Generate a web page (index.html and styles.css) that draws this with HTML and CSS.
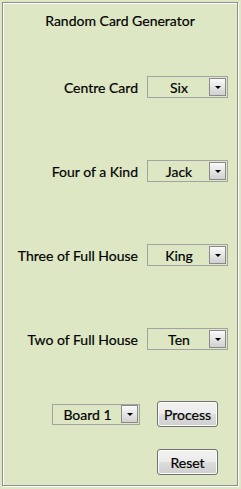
FILE: index.html
```html
<!DOCTYPE html>
<html lang="en">
<head>
  <meta charset="UTF-8" />
  <title>Random Card Generator</title>
  <link rel="stylesheet" href="styles.css">
</head>
<body>
  <div class="frame">
    <div class="title">Random Card Generator</div>

    <div class="row first">
      <span class="label">Centre Card</span>
      <div class="combo"><span class="value">Six</span><span class="drop"></span></div>
    </div>

    <div class="row">
      <span class="label">Four of a Kind</span>
      <div class="combo"><span class="value">Jack</span><span class="drop"></span></div>
    </div>

    <div class="row">
      <span class="label">Three of Full House</span>
      <div class="combo"><span class="value">King</span><span class="drop"></span></div>
    </div>

    <div class="row">
      <span class="label">Two of Full House</span>
      <div class="combo"><span class="value">Ten</span><span class="drop"></span></div>
    </div>

    <div class="actions">
      <div class="combo board"><span class="value">Board 1</span><span class="drop"></span></div>
      <button class="btn">Process</button>
    </div>

    <div class="actions reset-row">
      <button class="btn">Reset</button>
    </div>
  </div>
</body>
</html>
```

FILE: styles.css
```css
body {
  margin: 0;
  background-color: #dee7c4;
  font-family: Lato, "Open Sans", sans-serif;
  font-size: 14px;
  color: #000000;
}

.frame {
  margin: 2px;
  width: 236px;
  height: 484px;
  box-sizing: border-box;
  border: 1px solid #8e8e8e;
  box-shadow: 1px 1px 0 #ffffff, inset 1px 1px 0 #ffffff;
}

.title {
  padding-top: 10px;
  line-height: 16px;
  text-align: center;
}

.row {
  display: flex;
  align-items: center;
  height: 22px;
  margin-top: 62px;
}

.row.first {
  margin-top: 47px;
}

.label {
  width: 135px;
  text-align: right;
  margin-right: 9px;
  -webkit-text-stroke: 0.2px #000000;
}

.title,
.value,
.btn {
  -webkit-text-stroke: 0.2px #000000;
}

.combo {
  display: flex;
  align-items: center;
  width: 81px;
  height: 22px;
  box-sizing: border-box;
  border: 1px solid #a2a2a2;
  padding: 1px;
}

.combo .value {
  flex: 1;
  text-align: center;
}

.drop {
  position: relative;
  width: 17px;
  height: 18px;
  box-sizing: border-box;
  border: 1px solid #8a8a8a;
  background: linear-gradient(#fafafa, #d0d0d0);
}

.drop::after {
  content: "";
  position: absolute;
  left: 4.5px;
  top: 7px;
  border-left: 3px solid transparent;
  border-right: 3px solid transparent;
  border-top: 3px solid #000000;
}

.actions {
  display: flex;
  align-items: center;
  margin-top: 51px;
  padding-left: 49px;
}

.combo.board {
  width: 88px;
  height: 21px;
  margin-right: 17px;
}

.reset-row {
  margin-top: 22px;
  padding-left: 154px;
}

.btn {
  width: 61px;
  height: 26px;
  padding: 0;
  font-family: Lato, "Open Sans", sans-serif;
  font-size: 14px;
  color: #000000;
  border: 1px solid #707070;
  border-radius: 3px;
  box-shadow: inset 0 0 0 1px #fcfcfc;
  background: linear-gradient(#f2f2f2 0%, #ebebeb 50%, #dddddd 50%, #cfcfcf 100%);
}
```
